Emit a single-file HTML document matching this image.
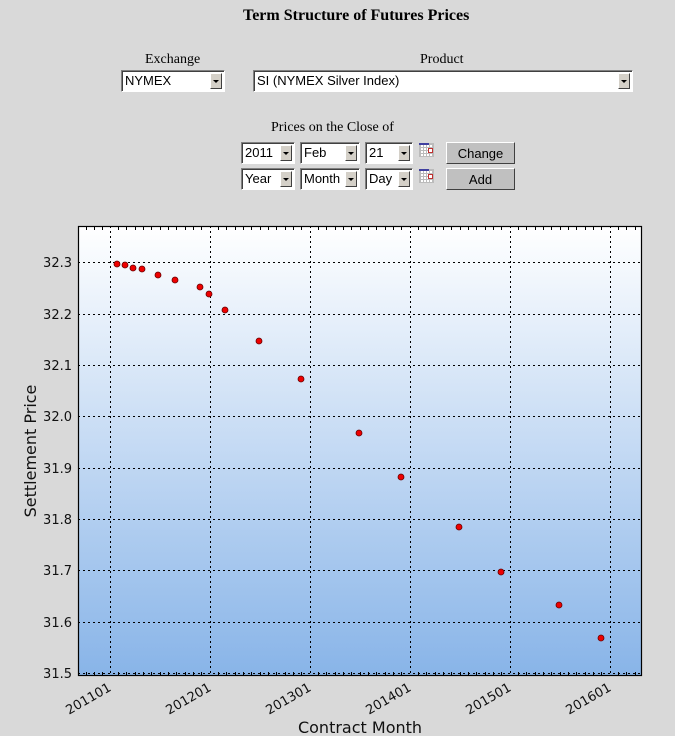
<!DOCTYPE html>
<html><head><style>
body{margin:0;width:675px;height:736px;background:#d9d9d9;position:relative;overflow:hidden;font-family:"Liberation Serif",serif;}
.t{position:absolute;white-space:nowrap;}
.sel{position:absolute;background:#fff;border:1px solid;border-color:#808080 #fff #fff #808080;box-shadow:inset 1px 1px 0 #404040;font:13px "Liberation Sans",sans-serif;box-sizing:border-box;padding:2px 0 0 3px;}
.sel i{position:absolute;right:2px;top:2px;bottom:2px;width:12px;background:#d4d0c8;border:1px solid;border-color:#fff #404040 #404040 #fff;box-sizing:border-box;}
.sel i:after{content:"";position:absolute;left:2px;top:6px;border:3px solid transparent;border-top:3px solid #000;border-bottom:0;}
.btn{position:absolute;background:#c0c0c0;border:1px solid;border-color:#fff #404040 #404040 #fff;box-sizing:border-box;font:13px "Liberation Sans",sans-serif;text-align:center;padding-top:3px;}
.cal{position:absolute;width:15px;height:14px;background:#fff;border:1px solid #bbb;box-sizing:border-box;background-image:linear-gradient(#bbb 1px,transparent 1px),linear-gradient(90deg,#bbb 1px,transparent 1px);background-size:3px 3px;}
.cal:before{content:"";position:absolute;left:-1px;top:-1px;width:10px;height:2px;background:#4040a0;}
.cal:after{content:"";position:absolute;left:8px;top:4px;width:3px;height:3px;border:1px solid #c03030;background:#fff;}
</style></head><body>
<div class="t" style="left:243px;top:7px;font-weight:bold;font-size:16px;">Term Structure of Futures Prices</div>
<div class="t" style="left:145px;top:52px;font-size:14px;">Exchange</div>
<div class="t" style="left:420px;top:52px;font-size:14px;">Product</div>
<div class="sel" style="left:121px;top:70px;width:104px;height:22px;">NYMEX<i></i></div>
<div class="sel" style="left:253px;top:70px;width:380px;height:22px;">SI (NYMEX Silver Index)<i></i></div>
<div class="t" style="left:271px;top:120px;font-size:14px;">Prices on the Close of</div>
<div class="sel" style="left:241px;top:142px;width:54px;height:22px;">2011<i></i></div>
<div class="sel" style="left:300px;top:142px;width:60px;height:22px;">Feb<i></i></div>
<div class="sel" style="left:365px;top:142px;width:48px;height:22px;">21<i></i></div>
<div class="cal" style="left:419px;top:143px;"></div>
<div class="btn" style="left:446px;top:142px;width:69px;height:22px;">Change</div>
<div class="sel" style="left:241px;top:168px;width:54px;height:22px;">Year<i></i></div>
<div class="sel" style="left:300px;top:168px;width:60px;height:22px;">Month<i></i></div>
<div class="sel" style="left:365px;top:168px;width:48px;height:22px;">Day<i></i></div>
<div class="cal" style="left:419px;top:169px;"></div>
<div class="btn" style="left:446px;top:168px;width:69px;height:22px;">Add</div>

<svg style="position:absolute;left:0;top:0" width="675" height="736" font-family="DejaVu Sans, sans-serif">
<defs><linearGradient id="g" x1="0" y1="0" x2="0" y2="1"><stop offset="0" stop-color="#ffffff"/><stop offset="1" stop-color="#88b4e8"/></linearGradient></defs>
<rect x="78" y="226" width="564" height="450" fill="url(#g)"/>
<g stroke="#000" stroke-dasharray="2,3" stroke-width="1">
<line x1="110.5" y1="226" x2="110.5" y2="676"/><line x1="210.5" y1="226" x2="210.5" y2="676"/><line x1="310.5" y1="226" x2="310.5" y2="676"/><line x1="410.5" y1="226" x2="410.5" y2="676"/><line x1="510.5" y1="226" x2="510.5" y2="676"/><line x1="610.5" y1="226" x2="610.5" y2="676"/>
<line x1="78" y1="262.5" x2="642" y2="262.5"/><line x1="78" y1="314.5" x2="642" y2="314.5"/><line x1="78" y1="365.5" x2="642" y2="365.5"/><line x1="78" y1="416.5" x2="642" y2="416.5"/><line x1="78" y1="468.5" x2="642" y2="468.5"/><line x1="78" y1="519.5" x2="642" y2="519.5"/><line x1="78" y1="570.5" x2="642" y2="570.5"/><line x1="78" y1="622.5" x2="642" y2="622.5"/><line x1="78" y1="673.5" x2="642" y2="673.5"/>
</g>
<g stroke="#000" stroke-width="1" id="tk"></g>
<rect x="78.5" y="226.5" width="563" height="449" fill="none" stroke="#000" stroke-width="1.2"/>
<g fill="#ee0000" stroke="#600" stroke-width="0.8">
<circle cx="117" cy="264" r="3"/><circle cx="125" cy="265" r="3"/><circle cx="133" cy="268" r="3"/><circle cx="142" cy="269" r="3"/><circle cx="158" cy="275" r="3"/><circle cx="175" cy="280" r="3"/><circle cx="200" cy="287" r="3"/><circle cx="209" cy="294" r="3"/><circle cx="225" cy="310" r="3"/><circle cx="259" cy="341" r="3"/><circle cx="301" cy="379" r="3"/><circle cx="359" cy="433" r="3"/><circle cx="401" cy="477" r="3"/><circle cx="459" cy="527" r="3"/><circle cx="501" cy="572" r="3"/><circle cx="559" cy="605" r="3"/><circle cx="601" cy="638" r="3"/>
</g>
<g font-size="13" fill="#111" text-anchor="end">
<text x="72" y="267">32.3</text><text x="72" y="319">32.2</text><text x="72" y="370">32.1</text><text x="72" y="421">32.0</text><text x="72" y="473">31.9</text><text x="72" y="524">31.8</text><text x="72" y="575">31.7</text><text x="72" y="627">31.6</text><text x="72" y="678">31.5</text>
</g>
<g font-size="13" fill="#111" text-anchor="end">
<text transform="translate(112,690) rotate(-30)">201101</text><text transform="translate(212,690) rotate(-30)">201201</text><text transform="translate(312,690) rotate(-30)">201301</text><text transform="translate(412,690) rotate(-30)">201401</text><text transform="translate(512,690) rotate(-30)">201501</text><text transform="translate(612,690) rotate(-30)">201601</text>
</g>
<text x="360" y="733" font-size="16" text-anchor="middle" fill="#111">Contract Month</text>
<text transform="translate(36,451) rotate(-90)" font-size="16" text-anchor="middle" fill="#111">Settlement Price</text>
<path stroke="#000" stroke-width="1" d="M86.5 226v4M94.5 226v4M102.5 226v4M118.5 226v4M126.5 226v4M135.5 226v4M143.5 226v4M151.5 226v4M160.5 226v4M168.5 226v4M176.5 226v4M185.5 226v4M193.5 226v4M201.5 226v4M86.5 676v-4M94.5 676v-4M102.5 676v-4M118.5 676v-4M126.5 676v-4M135.5 676v-4M143.5 676v-4M151.5 676v-4M160.5 676v-4M168.5 676v-4M176.5 676v-4M185.5 676v-4M193.5 676v-4M201.5 676v-4"/>
<path stroke="#000" stroke-width="1" transform="translate(100,0)" d="M118.5 226v4M126.5 226v4M135.5 226v4M143.5 226v4M151.5 226v4M160.5 226v4M168.5 226v4M176.5 226v4M185.5 226v4M193.5 226v4M201.5 226v4M118.5 676v-4M126.5 676v-4M135.5 676v-4M143.5 676v-4M151.5 676v-4M160.5 676v-4M168.5 676v-4M176.5 676v-4M185.5 676v-4M193.5 676v-4M201.5 676v-4"/>
<path stroke="#000" stroke-width="1" transform="translate(200,0)" d="M118.5 226v4M126.5 226v4M135.5 226v4M143.5 226v4M151.5 226v4M160.5 226v4M168.5 226v4M176.5 226v4M185.5 226v4M193.5 226v4M201.5 226v4M118.5 676v-4M126.5 676v-4M135.5 676v-4M143.5 676v-4M151.5 676v-4M160.5 676v-4M168.5 676v-4M176.5 676v-4M185.5 676v-4M193.5 676v-4M201.5 676v-4"/>
<path stroke="#000" stroke-width="1" transform="translate(300,0)" d="M118.5 226v4M126.5 226v4M135.5 226v4M143.5 226v4M151.5 226v4M160.5 226v4M168.5 226v4M176.5 226v4M185.5 226v4M193.5 226v4M201.5 226v4M118.5 676v-4M126.5 676v-4M135.5 676v-4M143.5 676v-4M151.5 676v-4M160.5 676v-4M168.5 676v-4M176.5 676v-4M185.5 676v-4M193.5 676v-4M201.5 676v-4"/>
<path stroke="#000" stroke-width="1" transform="translate(400,0)" d="M118.5 226v4M126.5 226v4M135.5 226v4M143.5 226v4M151.5 226v4M160.5 226v4M168.5 226v4M176.5 226v4M185.5 226v4M193.5 226v4M201.5 226v4M118.5 676v-4M126.5 676v-4M135.5 676v-4M143.5 676v-4M151.5 676v-4M160.5 676v-4M168.5 676v-4M176.5 676v-4M185.5 676v-4M193.5 676v-4M201.5 676v-4"/>
<path stroke="#000" stroke-width="1" transform="translate(500,0)" d="M118.5 226v4M126.5 226v4M135.5 226v4M118.5 676v-4M126.5 676v-4M135.5 676v-4"/>
</svg>
</body></html>
